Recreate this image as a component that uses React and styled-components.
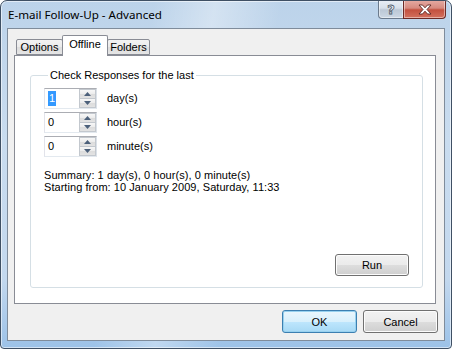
import React from "react";
import styled, { createGlobalStyle } from "styled-components";

const GlobalStyle = createGlobalStyle`
  html, body { margin: 0; padding: 0; background: #ffffff; }
  body { font-family: "Liberation Sans", Arial, sans-serif; font-size: 11px; color: #000; }
  * { box-sizing: border-box; }
`;

const Window = styled.div`
  width: 452px;
  height: 349px;
  display: flex;
  flex-direction: column;
  border: 1px solid #3f5064;
  border-radius: 7px 7px 4px 4px;
  overflow: hidden;
  background:
    linear-gradient(100deg, rgba(255,255,255,0) 30%, rgba(255,255,255,0.35) 42%, rgba(255,255,255,0) 55%),
    linear-gradient(to bottom, #bcd3ea 0%, #c9dcef 40%, #c3d8ee 80%, #9cc2e8 100%);
  box-shadow: inset 0 0 0 1px rgba(255, 255, 255, 0.55);
`;

const TitleBar = styled.div`
  height: 27px;
  display: flex;
  align-items: flex-start;
  flex: none;
`;

const Title = styled.div`
  flex: 1;
  padding-left: 7px;
  line-height: 27px;
  font-family: "Noto Sans", "Open Sans", sans-serif;
  font-size: 11.6px;
  color: #000;
`;

const CaptionButtons = styled.div`
  display: flex;
  margin-right: 5px;
  margin-top: -1px;
`;

const CaptionButton = styled.div`
  width: ${(p) => p.$w}px;
  height: 19px;
  display: flex;
  align-items: center;
  justify-content: center;
  border: 1px solid ${(p) => (p.$close ? "#6d2a26" : "#6b7a8c")};
  border-top: none;
  border-radius: ${(p) => (p.$close ? "0 0 4px 0" : "0 0 0 4px")};
  ${(p) => (p.$close ? "margin-left: -1px;" : "")}
  background: ${(p) =>
    p.$close
      ? "linear-gradient(to bottom, #e6aca4 0%, #d68a7f 45%, #c3503f 55%, #d3705e 100%)"
      : "linear-gradient(to bottom, #e9eff6 0%, #d7e0ea 45%, #bcc8d6 55%, #cdd8e4 100%)"};
  box-shadow: inset 0 0 0 1px rgba(255, 255, 255, 0.45);
`;

const HelpGlyph = styled.span`
  font-family: "DejaVu Sans", sans-serif;
  font-size: 13px;
  font-weight: bold;
  color: #eef2f6;
  -webkit-text-stroke: 0.8px #4f5b69;
  line-height: 1;
  margin-top: 1px;
`;

const Client = styled.div`
  flex: 1;
  margin: 0 6px 7px 6px;
  border: 1px solid #7f8c9b;
  background: #f0f0f0;
  display: flex;
  flex-direction: column;
  padding: 6px 6px 0 6px;
`;

const TabArea = styled.div`
  display: flex;
  flex-direction: column;
  margin-right: 2px;
`;

const TabStrip = styled.div`
  display: flex;
  align-items: flex-end;
  height: 20px;
  padding-left: 2px;
  position: relative;
  z-index: 1;
`;

const Tab = styled.div`
  width: ${(p) => p.$w}px;
  height: ${(p) => (p.$active ? 21 : 16)}px;
  margin-bottom: ${(p) => (p.$active ? -1 : 0)}px;
  margin-left: ${(p) => (p.$first ? 0 : -1)}px;
  border: 1px solid #898c95;
  border-bottom: ${(p) => (p.$active ? "none" : "1px solid #898c95")};
  border-radius: 2px 2px 0 0;
  background: ${(p) =>
    p.$active ? "#ffffff" : "linear-gradient(to bottom, #f3f3f3 0%, #ebebeb 50%, #dedede 51%, #e5e5e5 100%)"};
  display: flex;
  justify-content: center;
  align-items: ${(p) => (p.$active ? "flex-start" : "center")};
  padding-top: ${(p) => (p.$active ? 2 : 0)}px;
  line-height: 13px;
  font-size: 11px;
  position: relative;
  z-index: ${(p) => (p.$active ? 2 : 1)};
`;

const Panel = styled.div`
  height: 249px;
  border: 1px solid #898c95;
  background: #ffffff;
  display: flex;
  padding: 13px 12px 15px 15px;
`;

const Group = styled.fieldset`
  flex: 1;
  margin: 0;
  border: 1px solid #d5dfe5;
  border-radius: 3px;
  padding: 6px 13px 11px 13px;
  display: flex;
  flex-direction: column;
  min-width: 0;
`;

const Legend = styled.legend`
  padding: 0 2px;
  margin-left: 4px;
  line-height: 13px;
  font-size: 11px;
`;

const SpinRows = styled.div`
  display: flex;
  flex-direction: column;
  gap: 3px;
`;

const SpinRow = styled.div`
  display: flex;
  align-items: center;
  gap: 10px;
`;

const Edit = styled.div`
  width: 53px;
  height: 21px;
  display: flex;
  border: 1px solid #dbe1e8;
  border-top-color: #abadb3;
  border-left-color: #e2e3ea;
  border-bottom-color: #e3e9ef;
  background: #fff;
`;

const EditText = styled.div`
  flex: 1;
  padding-left: 3px;
  display: flex;
  align-items: center;
  line-height: 13px;
`;

const Selected = styled.span`
  background: #3399ff;
  color: #fff;
  padding: 1px 1px;
`;

const SpinCol = styled.div`
  width: 17px;
  display: flex;
  flex-direction: column;
`;

const SpinButton = styled.div`
  flex: 1;
  border: 1px solid #c3c8ce;
  margin-top: ${(p) => (p.$down ? -1 : 0)}px;
  background: linear-gradient(to bottom, #f7f7f7 0%, #ececec 50%, #dcdcdc 51%, #e3e3e3 100%);
  display: flex;
  align-items: center;
  justify-content: center;
`;

const Label = styled.span`
  line-height: 13px;
`;

const Summary = styled.div`
  margin-top: 12px;
  line-height: 12px;
  letter-spacing: 0.05px;
`;

const RunRow = styled.div`
  margin-top: auto;
  display: flex;
  justify-content: flex-end;
`;

const Button = styled.div`
  width: ${(p) => p.$w || 75}px;
  height: ${(p) => p.$h || 23}px;
  border: 1px solid ${(p) => (p.$default ? "#3c7fb1" : "#707070")};
  border-radius: 3px;
  display: flex;
  align-items: center;
  justify-content: center;
  font-size: 11px;
  background: ${(p) =>
    p.$default
      ? "linear-gradient(to bottom, #eaf6fd 0%, #d9f0fc 50%, #bee6fd 51%, #a7d9f5 100%)"
      : "linear-gradient(to bottom, #f2f2f2 0%, #ebebeb 50%, #dddddd 51%, #cfcfcf 100%)"};
  box-shadow: inset 0 0 0 1px ${(p) => (p.$default ? "#98d1ef" : "#fcfcfc")};
`;

const ButtonRow = styled.div`
  display: flex;
  justify-content: flex-end;
  gap: 6px;
  margin-top: 6px;
`;

const Arrow = ({ down }) => (
  <svg width="7" height="4" viewBox="0 0 7 4">
    <path d={down ? "M0 0 H7 L3.5 4 Z" : "M3.5 0 L7 4 H0 Z"} fill="#4c607a" />
  </svg>
);

const CloseGlyph = () => (
  <svg width="14" height="11" viewBox="0 0 14 11">
    <path
      d="M1 1 H4.5 L7 3.8 L9.5 1 H13 L9 5.5 L13 10 H9.5 L7 7.2 L4.5 10 H1 L5 5.5 Z"
      fill="#ffffff"
      stroke="#5a2520"
      strokeWidth="0.9"
      strokeLinejoin="round"
    />
  </svg>
);

const Spin = ({ value, selected, label }) => (
  <SpinRow>
    <Edit>
      <EditText>{selected ? <Selected>{value}</Selected> : value}</EditText>
      <SpinCol>
        <SpinButton>
          <Arrow />
        </SpinButton>
        <SpinButton $down>
          <Arrow down />
        </SpinButton>
      </SpinCol>
    </Edit>
    <Label>{label}</Label>
  </SpinRow>
);

export default function App() {
  return (
    <>
      <GlobalStyle />
      <Window>
        <TitleBar>
          <Title>E-mail Follow-Up - Advanced</Title>
          <CaptionButtons>
            <CaptionButton $w={26}>
              <HelpGlyph>?</HelpGlyph>
            </CaptionButton>
            <CaptionButton $w={43} $close>
              <CloseGlyph />
            </CaptionButton>
          </CaptionButtons>
        </TitleBar>
        <Client>
          <TabArea>
            <TabStrip>
              <Tab $w={47} $first>Options</Tab>
              <Tab $w={46} $active>Offline</Tab>
              <Tab $w={43}>Folders</Tab>
            </TabStrip>
            <Panel>
              <Group>
                <Legend>Check Responses for the last</Legend>
                <SpinRows>
                  <Spin value="1" selected label="day(s)" />
                  <Spin value="0" label="hour(s)" />
                  <Spin value="0" label="minute(s)" />
                </SpinRows>
                <Summary>
                  Summary: 1 day(s), 0 hour(s), 0 minute(s)
                  <br />
                  Starting from: 10 January 2009, Saturday, 11:33
                </Summary>
                <RunRow>
                  <Button $w={74} $h={22}>Run</Button>
                </RunRow>
              </Group>
            </Panel>
          </TabArea>
          <ButtonRow>
            <Button $default>OK</Button>
            <Button>Cancel</Button>
          </ButtonRow>
        </Client>
      </Window>
    </>
  );
}
